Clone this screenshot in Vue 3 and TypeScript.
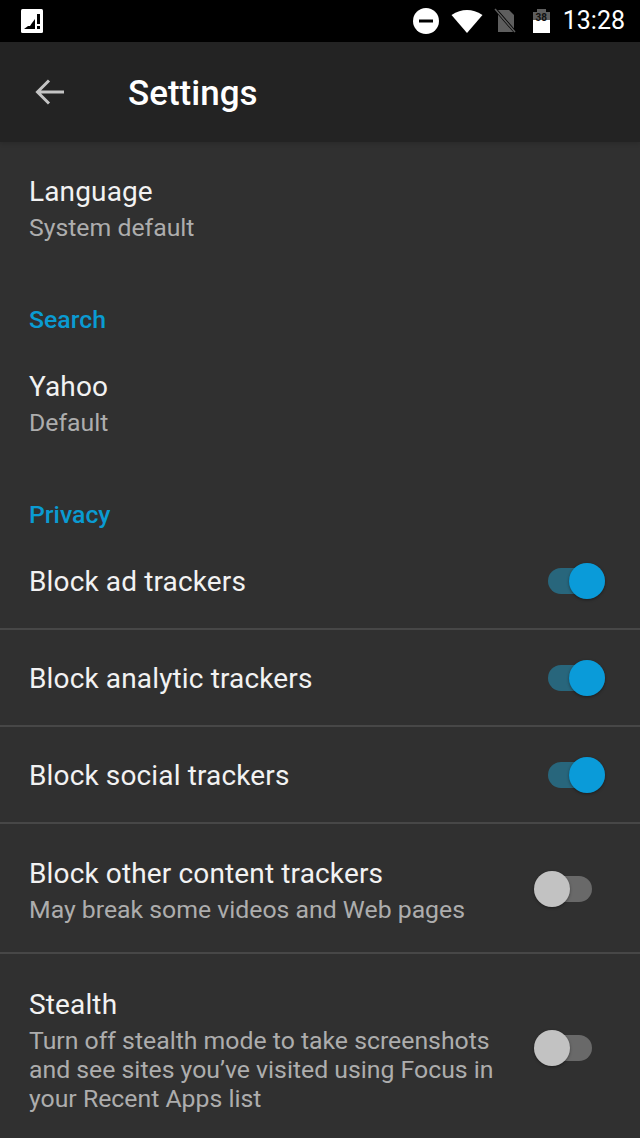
<template>
  <div class="screen">
    <div class="status-bar">
      <svg class="notif" width="24" height="24" viewBox="0 0 24 24">
        <rect x="1" y="0" width="22" height="24" rx="1.5" fill="#fff" />
        <path d="M4 20 L8 17 L10 17 L12 14 L15 10 V20 Z" fill="#000" />
        <rect x="17" y="5" width="3" height="10" fill="#000" />
        <rect x="17" y="17" width="3" height="3" fill="#000" />
      </svg>
      <div class="status-right">
        <svg width="28" height="28" viewBox="0 0 28 28">
          <circle cx="14" cy="14" r="13" fill="#fff" />
          <rect x="7" y="12.5" width="14" height="3" fill="#000" />
        </svg>
        <svg class="wifi" width="32" height="24" viewBox="0 0 32 24">
          <path d="M0.5 6 Q16 -4 31.5 6 L16 24 Z" fill="#fff" />
        </svg>
        <svg class="sim" width="24" height="26" viewBox="0 0 24 26">
          <path d="M4 2 H15 L20 7 V24 H4 Z" fill="#5e5e5e" />
          <path d="M2 2 L22 25" stroke="#000" stroke-width="3" />
          <path d="M1 1 L21 24" stroke="#5e5e5e" stroke-width="1.5" />
        </svg>
        <div class="battery">
          <span class="battery-cap"></span>
          <span class="battery-body">38</span>
        </div>
        <span class="clock">13:28</span>
      </div>
    </div>

    <header class="toolbar">
      <svg class="back" width="30" height="28" viewBox="0 0 30 28">
        <path d="M29 14 H3 M14 2.5 L2.5 14 L14 25.5" fill="none" stroke="#c4c4c4" stroke-width="3" />
      </svg>
      <h1 class="title">Settings</h1>
    </header>

    <main class="content">
      <div class="plain-item">
        <div class="item-title">Language</div>
        <div class="item-sub">System default</div>
      </div>

      <div class="section-label">Search</div>
      <div class="plain-item">
        <div class="item-title">Yahoo</div>
        <div class="item-sub">Default</div>
      </div>

      <div class="section-label">Privacy</div>
      <div
        v-for="row in rows"
        :key="row.title"
        class="row"
        :class="{ 'row-tall': row.lines === 2, 'row-last': row.lines === 3 }"
      >
        <div class="row-text">
          <div class="item-title">{{ row.title }}</div>
          <div v-if="row.sub" class="item-sub">{{ row.sub }}</div>
        </div>
        <div class="switch" :class="{ on: row.on }">
          <span class="track"></span>
          <span class="thumb"></span>
        </div>
      </div>
    </main>
  </div>
</template>

<script setup lang="ts">
interface Row {
  title: string;
  sub?: string;
  on: boolean;
  lines: number;
}

const rows: Row[] = [
  { title: 'Block ad trackers', on: true, lines: 1 },
  { title: 'Block analytic trackers', on: true, lines: 1 },
  { title: 'Block social trackers', on: true, lines: 1 },
  {
    title: 'Block other content trackers',
    sub: 'May break some videos and Web pages',
    on: false,
    lines: 2
  },
  {
    title: 'Stealth',
    sub: 'Turn off stealth mode to take screenshots and see sites you’ve visited using Focus in your Recent Apps list',
    on: false,
    lines: 3
  }
];
</script>

<style>
html,
body {
  margin: 0;
  background: #303030;
}
</style>

<style scoped>
.screen {
  width: 640px;
  height: 1138px;
  overflow: hidden;
  background: #303030;
  font-family: Roboto, sans-serif;
  color: #fff;
}

.status-bar {
  height: 42px;
  background: #000;
  display: flex;
  align-items: center;
  justify-content: space-between;
  padding: 0 15px 0 20px;
  box-sizing: border-box;
}

.status-right {
  display: flex;
  align-items: center;
}

.wifi {
  margin-left: 11px;
}

.sim {
  margin-left: 11px;
}

.battery {
  margin-left: 15px;
  width: 17px;
  height: 24px;
  display: flex;
  flex-direction: column;
  align-items: center;
}

.battery-cap {
  width: 9px;
  height: 3px;
  background: #5e5e5e;
}

.battery-body {
  width: 17px;
  height: 21px;
  font-size: 10px;
  font-weight: 700;
  line-height: 12px;
  text-align: center;
  color: #111;
  background: linear-gradient(#5e5e5e 40%, #fff 40%);
}

.clock {
  margin-left: 13px;
  font-size: 25px;
  color: #fff;
  line-height: 28px;
}

.toolbar {
  height: 100px;
  background: #232323;
  display: flex;
  align-items: center;
  padding-left: 35px;
  box-sizing: border-box;
  box-shadow: 0 2px 4px rgba(0, 0, 0, 0.12);
}

.title {
  margin: 2px 0 0 63px;
  font-size: 35px;
  font-weight: 500;
  color: #fff;
}

.content {
  display: flex;
  flex-direction: column;
}

.plain-item {
  padding: 32px 29px 0;
  height: 83px;
}

.item-title {
  font-size: 28px;
  letter-spacing: 0.14px;
  line-height: 36px;
  color: #f2f2f2;
}

.item-sub {
  margin-top: 3px;
  font-size: 24.8px;
  line-height: 29px;
  color: #adadad;
}

.section-label {
  padding: 0 29px;
  margin-top: 46px;
  font-size: 24.8px;
  line-height: 34px;
  font-weight: 500;
  color: #0a9bd2;
}

.row {
  height: 97px;
  padding: 2px 35px 0 29px;
  box-sizing: border-box;
  display: flex;
  align-items: center;
  justify-content: space-between;
  border-bottom: 2px solid #474747;
}

.section-label + .row {
  margin-top: 1px;
}

.row-tall {
  height: 130px;
  padding-top: 4px;
}

.row-last {
  height: 190px;
  border-bottom: none;
  align-items: flex-start;
  padding-top: 33px;
}

.row-text {
  width: 480px;
}

.switch {
  position: relative;
  width: 58px;
  height: 36px;
  flex: none;
  margin-bottom: 2px;
}

.row-tall .switch {
  margin-right: 13px;
  margin-bottom: 3px;
}

.row-last .switch {
  margin-right: 13px;
  margin-top: 43px;
}

.track {
  position: absolute;
  left: 1px;
  top: 5px;
  width: 57px;
  height: 26px;
  border-radius: 13px;
  background: #696969;
}

.thumb {
  position: absolute;
  left: 0;
  top: 0;
  width: 36px;
  height: 36px;
  border-radius: 50%;
  background: #c2c2c2;
  box-shadow: 0 1px 3px rgba(0, 0, 0, 0.4);
}

.switch.on .track {
  background: #28667c;
}

.switch.on .thumb {
  left: 22px;
  background: #0a9bd9;
}
</style>
